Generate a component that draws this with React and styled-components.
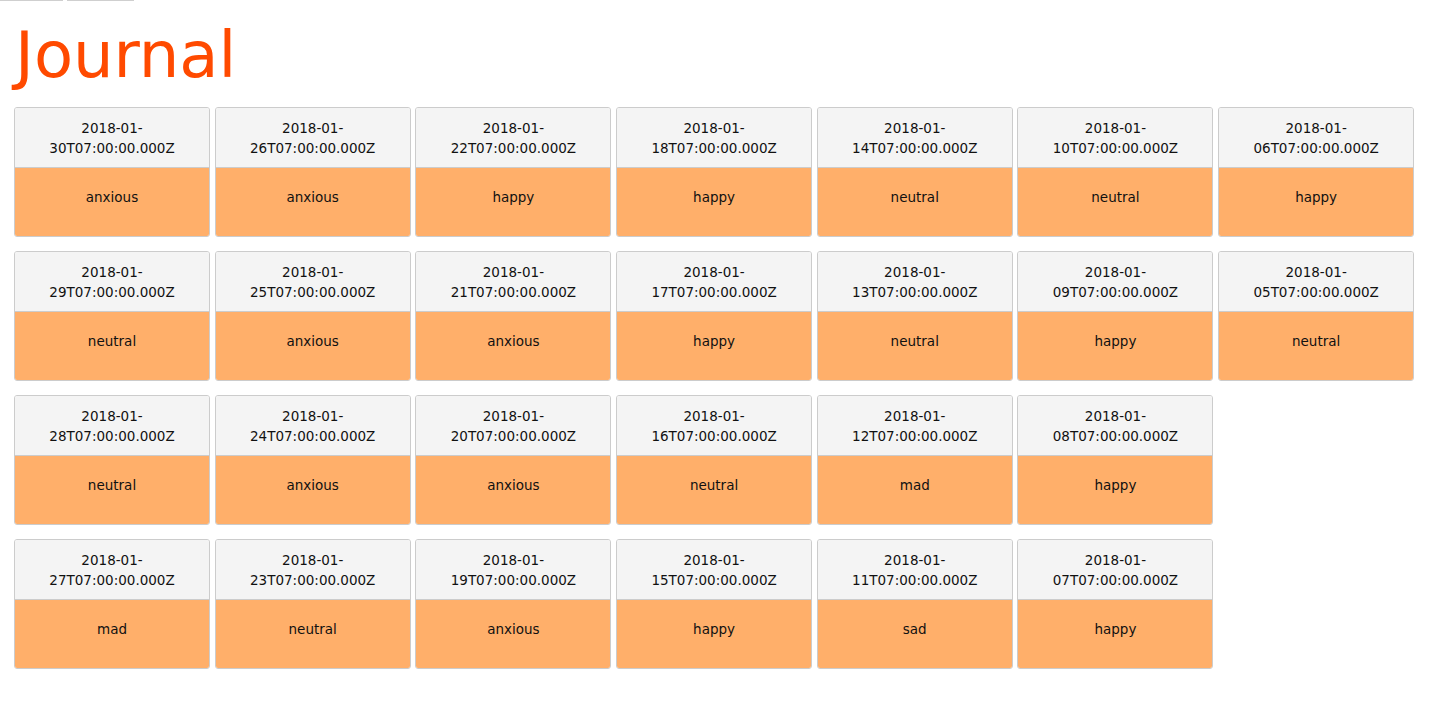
import React from "react";
import styled, { createGlobalStyle } from "styled-components";

const GlobalStyle = createGlobalStyle`
  html, body { margin: 0; padding: 0; background: #fff; }
  body { font-family: "DejaVu Sans", "Open Sans", sans-serif; color: #111; }
`;

const Page = styled.div`
  padding: 0 14px 0 0;
`;

const Nav = styled.nav`
  display: flex;
  gap: 4px;
  height: 1px;
`;

const NavButton = styled.div`
  width: ${(p) => p.$w}px;
  height: 1px;
  background: #cfcfcf;
`;

const Title = styled.h1`
  margin: 17px 0 0 15px;
  font-family: "DejaVu Sans", sans-serif;
  font-weight: 400;
  font-size: 64px;
  line-height: normal;
  color: #ff4a00;
`;

const Grid = styled.div`
  display: grid;
  grid-template-columns: repeat(7, 196px);
  grid-template-rows: repeat(4, 130px);
  grid-auto-flow: column;
  column-gap: 4.7px;
  row-gap: 14px;
  margin: 15px 0 0 14px;
`;

const Card = styled.div`
  display: flex;
  flex-direction: column;
  border: 1px solid #cccccc;
  border-radius: 3px;
  overflow: hidden;
  text-align: center;
  font-size: 13.5px;
  line-height: 20px;
`;

const DateHead = styled.div`
  height: 60px;
  box-sizing: border-box;
  padding-top: 10px;
  background: #f4f4f4;
  border-bottom: 1px solid #cccccc;
`;

const Line = styled.span`
  display: block;
`;

const Mood = styled.div`
  flex: 1;
  padding-top: 19px;
  background: #ffaf6a;
`;

const entries = [
  ["30", "anxious"], ["29", "neutral"], ["28", "neutral"], ["27", "mad"],
  ["26", "anxious"], ["25", "anxious"], ["24", "anxious"], ["23", "neutral"],
  ["22", "happy"], ["21", "anxious"], ["20", "anxious"], ["19", "anxious"],
  ["18", "happy"], ["17", "happy"], ["16", "neutral"], ["15", "happy"],
  ["14", "neutral"], ["13", "neutral"], ["12", "mad"], ["11", "sad"],
  ["10", "neutral"], ["09", "happy"], ["08", "happy"], ["07", "happy"],
  ["06", "happy"], ["05", "neutral"],
];

export default function App() {
  return (
    <Page>
      <GlobalStyle />
      <Nav>
        <NavButton $w={63} />
        <NavButton $w={67} />
      </Nav>
      <Title>Journal</Title>
      <Grid>
        {entries.map(([d, mood]) => (
          <Card key={d}>
            <DateHead>
              <Line>2018-01-</Line>
              <Line>{d}T07:00:00.000Z</Line>
            </DateHead>
            <Mood>{mood}</Mood>
          </Card>
        ))}
      </Grid>
    </Page>
  );
}
